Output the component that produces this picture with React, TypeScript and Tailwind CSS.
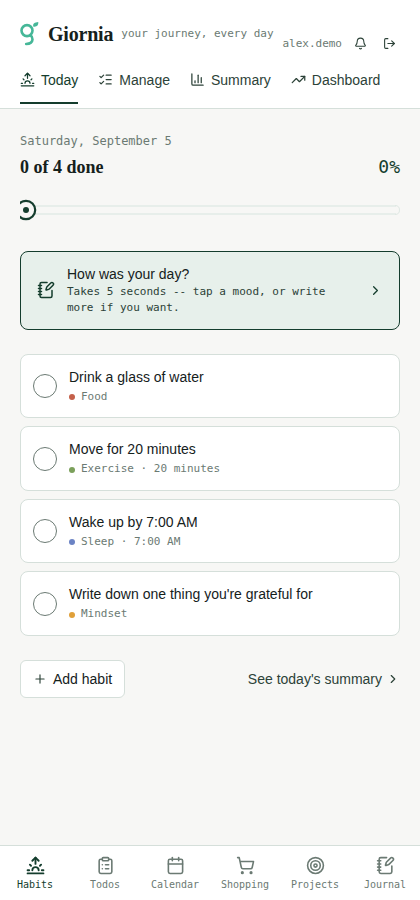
import {
  Bell,
  Calendar,
  ChartColumn,
  ChevronRight,
  ClipboardList,
  ListChecks,
  LogOut,
  NotebookPen,
  Plus,
  ShoppingCart,
  Sunrise,
  Target,
  TrendingUp,
} from 'lucide-react';

const tabs = [
  { label: 'Today', icon: Sunrise, active: true },
  { label: 'Manage', icon: ListChecks, active: false },
  { label: 'Summary', icon: ChartColumn, active: false },
  { label: 'Dashboard', icon: TrendingUp, active: false },
];

const habits = [
  { title: 'Drink a glass of water', meta: 'Food', dot: 'bg-[#c4604a]' },
  { title: 'Move for 20 minutes', meta: 'Exercise · 20 minutes', dot: 'bg-[#7ba05b]' },
  { title: 'Wake up by 7:00 AM', meta: 'Sleep · 7:00 AM', dot: 'bg-[#6b83c4]' },
  { title: "Write down one thing you're grateful for", meta: 'Mindset', dot: 'bg-[#e0a03a]' },
];

const navItems = [
  { label: 'Habits', icon: Sunrise, active: true },
  { label: 'Todos', icon: ClipboardList, active: false },
  { label: 'Calendar', icon: Calendar, active: false },
  { label: 'Shopping', icon: ShoppingCart, active: false },
  { label: 'Projects', icon: Target, active: false },
  { label: 'Journal', icon: NotebookPen, active: false },
];

function Logo() {
  return (
    <svg width="20" height="26" viewBox="0 0 20 26" fill="none" className="shrink-0">
      <g stroke="#46b798" strokeWidth="2.6" strokeLinecap="round">
        <circle cx="7" cy="9.6" r="5.5" />
        <path d="M10.6 14.4C12 15.4 12.6 16.6 12.5 18.4C12.3 21.4 9.8 22.9 6.2 23" />
      </g>
      <path d="M13.2 5.6C12.7 2.6 14.6 1.4 18.3 1.1C18.6 4.4 16.6 6.4 13.2 5.6Z" fill="#46b798" />
    </svg>
  );
}

function Header() {
  return (
    <header className="h-[109px] border-b border-[#d5dfda] bg-white px-5 pt-5">
      <div className="flex h-[28px] items-center">
        <Logo />
        <span className="ml-2 font-['Liberation_Serif',serif] text-[20px] leading-7 font-bold tracking-[-0.2px] text-[#15211c]">
          Giornia
        </span>
        <span className="mb-0.5 ml-2 font-['DejaVu_Sans_Mono',monospace] text-[11px] whitespace-nowrap text-[#6b7a73]">
          your journey, every day
        </span>
        <div className="mt-[19px] ml-auto flex items-center pr-1">
          <span className="mr-3 mb-px font-['DejaVu_Sans_Mono',monospace] text-[11px] text-[#6b7a73]">
            alex.demo
          </span>
          <Bell size={13} className="mr-4 text-[#2c4238]" />
          <LogOut size={13} className="text-[#2c4238]" />
        </div>
      </div>

      <nav className="mt-2 flex gap-5">
        {tabs.map(({ label, icon: Icon, active }) => (
          <a
            key={label}
            className={
              active
                ? 'flex h-[48px] items-center gap-1.5 border-b-2 border-[#143d2d] text-[#143d2d]'
                : 'flex h-[48px] items-center gap-1.5 border-b-2 border-transparent text-[#2c4238]'
            }
          >
            <Icon size={15} />
            <span className="pt-0.5">{label}</span>
          </a>
        ))}
      </nav>
    </header>
  );
}

function Progress() {
  return (
    <svg width="380" height="24" viewBox="0 0 380 24" fill="none" className="mt-[17px] block">
      <path d="M0 8H376" stroke="#e7eeea" strokeWidth="2" />
      <path d="M0 16H376" stroke="#e7eeea" strokeWidth="2" />
      <path d="M375 7.5Q379.5 7.5 379.5 12T375 16.5" stroke="#dfe8e3" />
      <circle cx="6" cy="12" r="9.2" fill="#f7f7f5" stroke="#143d2d" strokeWidth="2.2" />
      <circle cx="6" cy="12" r="3" fill="#143d2d" />
    </svg>
  );
}

function BottomNav() {
  return (
    <nav className="mt-auto grid h-[55px] grid-cols-6 border-t border-[#d5dfda] bg-white">
      {navItems.map(({ label, icon: Icon, active }) => (
        <a
          key={label}
          className={
            active
              ? 'flex flex-col items-center pt-2.5 text-[#143d2d]'
              : 'flex flex-col items-center pt-2.5 text-[#6b7a73]'
          }
        >
          <Icon size={19} strokeWidth={active ? 2.4 : 2} />
          <span className="mt-[3px] font-['DejaVu_Sans_Mono',monospace] text-[10px] leading-[14px]">
            {label}
          </span>
        </a>
      ))}
    </nav>
  );
}

export default function App() {
  return (
    <div className="flex h-[900px] w-[420px] flex-col bg-[#f7f7f5] font-['Liberation_Sans',sans-serif] text-[14px] leading-[21px] text-[#15211c]">
      <Header />

      <main className="px-5 pt-[23px]">
        <p className="font-['DejaVu_Sans_Mono',monospace] text-[12px] leading-[18px] text-[#6b7a73]">
          Saturday, September 5
        </p>
        <div className="mt-1 flex items-center justify-between leading-[27px]">
          <h1 className="font-['Liberation_Serif',serif] text-[18px] font-bold">0 of 4 done</h1>
          <span className="-mt-0.5 font-['DejaVu_Sans_Mono',monospace] text-[18px] text-[#143d2d]">0%</span>
        </div>

        <Progress />

        {/* Journal prompt */}
        <a className="mt-[29px] flex h-[79px] items-center rounded-[8px] border border-[#143d2d] bg-[#e7f0eb] px-4">
          <NotebookPen size={18} className="mb-0.5 shrink-0 text-[#143d2d]" />
          <div className="ml-3 flex-1">
            <p className="leading-[17px]">How was your day?</p>
            <p className="mt-px w-[270px] font-['DejaVu_Sans_Mono',monospace] text-[11px] leading-4 text-[#2c4238]">
              Takes 5 seconds -- tap a mood, or write more if you want.
            </p>
          </div>
          <ChevronRight size={15} className="mb-px shrink-0 text-[#143d2d]" />
        </a>

        <ul className="mt-[23.7px] flex flex-col gap-2">
          {habits.map((habit) => (
            <li
              key={habit.title}
              className="flex h-[64.5px] items-center gap-3 rounded-[8px] border border-[#d5dfda] bg-white px-3"
            >
              <span className="mt-[0.6px] size-6 shrink-0 rounded-full border border-[#6b7a73]" />
              <div>
                <p>{habit.title}</p>
                <p className="mt-px flex items-center gap-1.5 font-['DejaVu_Sans_Mono',monospace] text-[11px] leading-[16.5px] text-[#6b7a73]">
                  <span className={`mt-px size-1.5 rounded-full ${habit.dot}`} />
                  {habit.meta}
                </p>
              </div>
            </li>
          ))}
        </ul>

        <div className="mt-[24.3px] flex items-center justify-between">
          <button className="flex h-[38px] items-center gap-1.5 rounded-[6px] border border-[#d5dfda] bg-white px-3">
            <Plus size={14} className="text-[#2c4238]" />
            <span className="pt-px">Add habit</span>
          </button>
          <a className="flex items-center gap-1 text-[#2c4238]">
            <span className="pt-px">See today's summary</span>
            <ChevronRight size={14} />
          </a>
        </div>
      </main>

      <BottomNav />
    </div>
  );
}
